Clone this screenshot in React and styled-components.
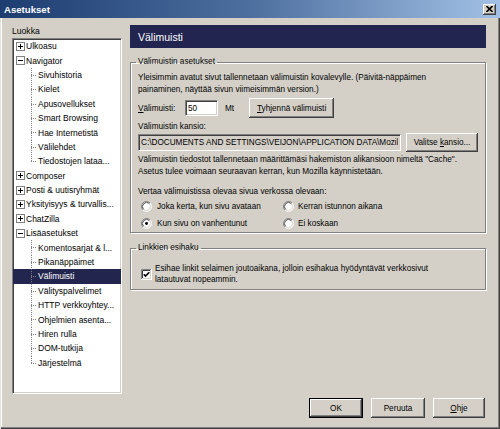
import React from "react";
import styled, { createGlobalStyle, css } from "styled-components";

const GlobalStyle = createGlobalStyle`
  html, body {
    margin: 0;
    padding: 0;
    background: #d4d0c8;
  }
  body {
    font-family: "Liberation Sans", Arial, sans-serif;
    font-size: 8.2px;
    color: #000;
  }
`;

const bevelOut = css`
  box-shadow: inset -1px -1px #404040, inset 1px 1px #fff,
    inset -2px -2px #808080, inset 2px 2px #d4d0c8;
`;

const sunken = css`
  border: 1px solid;
  border-color: #808080 #fff #fff #808080;
  box-shadow: inset 1px 1px #404040, inset -1px -1px #d4d0c8;
`;

const Window = styled.div`
  width: 500px;
  height: 429px;
  box-sizing: border-box;
  display: flex;
  flex-direction: column;
  padding: 0 2px 2px 2px;
  background: #d4d0c8;
  box-shadow: inset 1px 0 #e4e2dc, inset -1px -1px #404040,
    inset -2px -2px #808080, inset 2px 0 #fff;
`;

const TitleBar = styled.div`
  height: 18px;
  margin: 0 -2px;
  padding: 0 4px;
  display: flex;
  align-items: center;
  justify-content: space-between;
  background: linear-gradient(to right, #1d3c70, #4d6f9f 50%, #a3c1e6);
  color: #fff;
  font-weight: bold;
  font-size: 9.6px;
`;

const CloseButton = styled.div`
  width: 13px;
  height: 11px;
  display: flex;
  align-items: center;
  justify-content: center;
  background: #d4d0c8;
  ${bevelOut};
`;

const Body = styled.div`
  display: grid;
  grid-template-columns: 110px 356px;
  column-gap: 8px;
  padding: 7px 0 0 10px;
`;

const Column = styled.div`
  display: flex;
  flex-direction: column;
`;

const TreeLabel = styled.div`
  height: 13px;
  line-height: 13px;
  font-size: 8.6px;
`;

const Tree = styled.div`
  height: 356px;
  box-sizing: border-box;
  background: #fff;
  ${sunken};
  overflow: hidden;
`;

const TreeRow = styled.div`
  height: 14.4px;
  display: flex;
  align-items: center;
  gap: 1px;
  padding-left: ${(p) => (p.$level ? 18 : 3)}px;
  font-size: 8.5px;
  white-space: nowrap;
  overflow: hidden;
  ${(p) =>
    p.$selected &&
    css`
      background: #22264f;
      color: #fff;
    `}
`;

const RowText = styled.span`
  line-height: 14px;
`;

const Header = styled.div`
  height: 23px;
  display: flex;
  align-items: center;
  padding-left: 8px;
  background: #22254f;
  color: #fff;
  font-size: 10.5px;
`;

const Group = styled.fieldset`
  margin: ${(p) => p.$mt}px 0 0 0;
  padding: 0 6px ${(p) => p.$pb || 0}px 7px;
  border: 1px solid #808080;
  box-shadow: inset 1px 1px #fff, 1px 1px #fff;
  min-width: 0;
`;

const Legend = styled.legend`
  padding: 0 2px;
  margin-left: -2px;
  line-height: 12px;
`;

const Para = styled.p`
  margin: ${(p) => p.$mt}px 0 0 0;
  line-height: ${(p) => p.$lh || 12}px;
`;

const Row = styled.div`
  display: flex;
  align-items: center;
  margin-top: ${(p) => p.$mt || 0}px;
  height: ${(p) => p.$h}px;
`;

const FieldLabel = styled.span`
  width: ${(p) => p.$w}px;
  flex: none;
`;

const TextInput = styled.input`
  font: inherit;
  box-sizing: border-box;
  width: ${(p) => p.$w}px;
  height: ${(p) => p.$h}px;
  padding: 0 2px;
  margin: 0;
  color: #000;
  background: ${(p) => (p.$disabled ? "#d4d0c8" : "#fff")};
  ${sunken};
  outline: none;
`;

const Unit = styled.span`
  margin: 0 ${(p) => p.$mr}px 0 ${(p) => p.$ml}px;
`;

const Button = styled.button`
  font: inherit;
  color: #000;
  box-sizing: border-box;
  width: ${(p) => p.$w}px;
  height: ${(p) => p.$h || 20}px;
  margin: 0 0 0 ${(p) => p.$ml || 0}px;
  padding: 0;
  background: #d4d0c8;
  border: none;
  ${bevelOut};
  ${(p) =>
    p.$default &&
    css`
      border: 1px solid #000;
    `}
`;

const RadioGrid = styled.div`
  display: grid;
  grid-template-columns: 142px 1fr;
  grid-auto-rows: 17px;
  padding-left: 3px;
`;

const Option = styled.label`
  display: flex;
  align-items: center;
  gap: ${(p) => p.$gap}px;
`;

const CheckRow = styled.div`
  display: flex;
  align-items: center;
  gap: 3px;
  padding: 9px 0 0 3px;
`;

const Footer = styled.div`
  display: flex;
  justify-content: flex-end;
  gap: 8px;
  margin-top: 4px;
  padding-right: 13px;
`;

const Expander = ({ open }) => (
  <svg width="9" height="9" viewBox="0 0 9 9" style={{ flex: "none" }}>
    <rect x="0.5" y="0.5" width="8" height="8" fill="#fff" stroke="#808080" />
    <line x1="2" y1="4.5" x2="7" y2="4.5" stroke="#000" />
    {!open && <line x1="4.5" y1="2" x2="4.5" y2="7" stroke="#000" />}
  </svg>
);

const Connector = ({ last }) => (
  <svg width="6" height="14.4" viewBox="0 0 6 14.4" style={{ flex: "none" }}>
    <line
      x1="0.5"
      y1="0"
      x2="0.5"
      y2={last ? 7.5 : 14.4}
      stroke="#808080"
      strokeDasharray="1 1"
    />
    <line x1="0" y1="7.5" x2="6" y2="7.5" stroke="#808080" strokeDasharray="1 1" />
  </svg>
);

const Radio = ({ checked }) => (
  <svg width="11" height="11" viewBox="0 0 12 12" style={{ flex: "none" }}>
    <circle cx="6" cy="6" r="5" fill="#fff" />
    <path d="M2.11 9.89 A5.5 5.5 0 0 1 9.89 2.11" fill="none" stroke="#808080" />
    <path d="M9.89 2.11 A5.5 5.5 0 0 1 2.11 9.89" fill="none" stroke="#fff" />
    <path d="M2.82 9.18 A4.5 4.5 0 0 1 9.18 2.82" fill="none" stroke="#404040" />
    <path d="M9.18 2.82 A4.5 4.5 0 0 1 2.82 9.18" fill="none" stroke="#d4d0c8" />
    {checked && <circle cx="6" cy="6" r="1.6" fill="#000" />}
  </svg>
);

const Checkbox = () => (
  <svg width="11" height="11" viewBox="0 0 11 11" style={{ flex: "none" }}>
    <rect x="0" y="0" width="11" height="11" fill="#fff" />
    <path d="M0.5 11 V0.5 H11" fill="none" stroke="#808080" />
    <path d="M1.5 10 V1.5 H10" fill="none" stroke="#404040" />
    <path d="M0 10.5 H10.5 V0" fill="none" stroke="#fff" />
    <path d="M1 9.5 H9.5 V1" fill="none" stroke="#d4d0c8" />
    <path d="M2.8 5.2 L4.5 7 L8.3 3.2" fill="none" stroke="#000" strokeWidth="1.6" />
  </svg>
);

const tree = [
  { text: "Ulkoasu" },
  {
    text: "Navigator",
    open: true,
    children: [
      "Sivuhistoria",
      "Kielet",
      "Apusovellukset",
      "Smart Browsing",
      "Hae Internetistä",
      "Välilehdet",
      "Tiedostojen lataa...",
    ],
  },
  { text: "Composer" },
  { text: "Posti & uutisryhmät" },
  { text: "Yksityisyys & turvallis..." },
  { text: "ChatZilla" },
  {
    text: "Lisäasetukset",
    open: true,
    children: [
      "Komentosarjat & l...",
      "Pikanäppäimet",
      "Välimuisti",
      "Välityspalvelimet",
      "HTTP verkkoyhtey...",
      "Ohjelmien asenta...",
      "Hiren rulla",
      "DOM-tutkija",
      "Järjestelmä",
    ],
  },
];

const CategoryTree = () => (
  <Tree>
    {tree.map((node) => (
      <React.Fragment key={node.text}>
        <TreeRow>
          <Expander open={node.open} />
          <RowText>{node.text}</RowText>
        </TreeRow>
        {node.open &&
          node.children.map((child, i) => (
            <TreeRow key={child} $level={1} $selected={child === "Välimuisti"}>
              <Connector last={i === node.children.length - 1} />
              <RowText>{child}</RowText>
            </TreeRow>
          ))}
      </React.Fragment>
    ))}
  </Tree>
);

export default function App() {
  return (
    <>
      <GlobalStyle />
      <Window>
        <TitleBar>
          <span>Asetukset</span>
          <CloseButton>
            <svg width="7" height="6" viewBox="0 0 7 6">
              <path d="M0.5 0 L6.5 6 M6.5 0 L0.5 6" stroke="#000" strokeWidth="1.6" />
            </svg>
          </CloseButton>
        </TitleBar>
        <Body>
          <Column>
            <TreeLabel>Luokka</TreeLabel>
            <CategoryTree />
          </Column>
          <Column>
            <Header>Välimuisti</Header>
            <Group $mt={8}>
              <Legend>Välimuistin asetukset</Legend>
              <Para $mt={4}>
                Yleisimmin avatut sivut tallennetaan välimuistin kovalevylle. (Päivitä-näppäimen
                <br />
                painaminen, näyttää sivun viimeisimmän version.)
              </Para>
              <Row $mt={2} $h={20}>
                <FieldLabel $w={47}>
                  <u>V</u>älimuisti:
                </FieldLabel>
                <TextInput $w={33} $h={16} defaultValue="50" />
                <Unit $ml={7} $mr={15}>Mt</Unit>
                <Button $w={85}>
                  <u>T</u>yhjennä välimuisti
                </Button>
              </Row>
              <Para $mt={3}>Välimuistin kansio:</Para>
              <Row $h={19}>
                <TextInput
                  $w={263}
                  $h={17}
                  $disabled
                  readOnly
                  defaultValue="C:\DOCUMENTS AND SETTINGS\VEIJON\APPLICATION DATA\Mozilla\Profiles\default"
                />
                <Button $w={72} $h={19} $ml={5}>
                  Valitse <u>k</u>ansio...
                </Button>
              </Row>
              <Para $mt={2}>
                Välimuistin tiedostot tallennetaan määrittämäsi hakemiston alikansioon nimeltä "Cache".
                <br />
                Asetus tulee voimaan seuraavan kerran, kun Mozilla käynnistetään.
              </Para>
              <Para $mt={8}>Vertaa välimuistissa olevaa sivua verkossa olevaan:</Para>
              <RadioGrid>
                <Option $gap={5}>
                  <Radio />
                  Joka kerta, kun sivu avataan
                </Option>
                <Option $gap={4}>
                  <Radio />
                  Kerran istunnon aikana
                </Option>
                <Option $gap={5}>
                  <Radio checked />
                  Kun sivu on vanhentunut
                </Option>
                <Option $gap={4}>
                  <Radio />
                  Ei koskaan
                </Option>
              </RadioGrid>
            </Group>
            <Group $mt={9} $pb={4}>
              <Legend>Linkkien esihaku</Legend>
              <CheckRow>
                <Checkbox />
                <Para $mt={0} $lh={11}>
                  Esihae linkit selaimen joutoaikana, jolloin esihakua hyödyntävät verkkosivut
                  <br />
                  latautuvat nopeammin.
                </Para>
              </CheckRow>
            </Group>
          </Column>
        </Body>
        <Footer>
          <Button $w={54} $default>
            OK
          </Button>
          <Button $w={54}>Peruuta</Button>
          <Button $w={52}>
            <u>O</u>hje
          </Button>
        </Footer>
      </Window>
    </>
  );
}
